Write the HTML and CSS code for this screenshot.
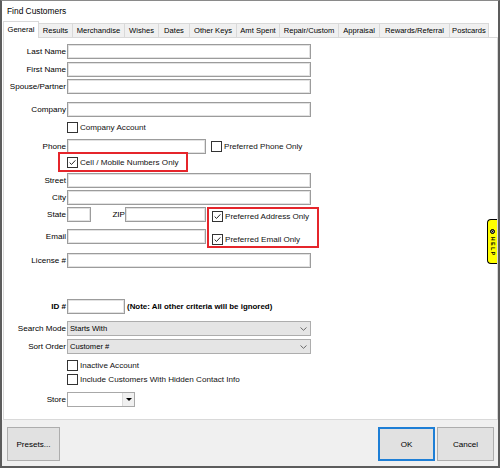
FILE: index.html
```html
<!DOCTYPE html>
<html>
<head>
<meta charset="utf-8">
<link rel="stylesheet" href="styles.css">
</head>
<body>
<div class="window">
  <div class="titlebar">Find Customers</div>
  <div class="tabs">
    <div class="tab active">General</div>
    <div class="tab">Results</div>
    <div class="tab">Merchandise</div>
    <div class="tab">Wishes</div>
    <div class="tab">Dates</div>
    <div class="tab">Other Keys</div>
    <div class="tab">Amt Spent</div>
    <div class="tab">Repair/Custom</div>
    <div class="tab">Appraisal</div>
    <div class="tab">Rewards/Referral</div>
    <div class="tab">Postcards</div>
  </div>
  <div class="panel">
    <div class="form">
      <div class="row r-last"><span class="lbl">Last Name</span><span class="inp full"></span></div>
      <div class="row r-first"><span class="lbl">First Name</span><span class="inp full"></span></div>
      <div class="row r-spouse"><span class="lbl">Spouse/Partner</span><span class="inp full"></span></div>
      <div class="row r-company"><span class="lbl">Company</span><span class="inp full"></span></div>
      <div class="chkrow r-companyacct"><span class="cb"></span><span class="cbtext">Company Account</span></div>
      <div class="row r-phone"><span class="lbl">Phone</span><span class="inp mid"></span><span class="cb pref-phone"></span><span class="cbtext">Preferred Phone Only</span></div>
      <div class="redbox cellbox"><span class="cb"><svg viewBox="0 0 11 11"><polyline points="2,5.6 4.3,7.9 9,2.9"/></svg></span><span class="cbtext">Cell / Mobile Numbers Only</span></div>
      <div class="row r-street"><span class="lbl">Street</span><span class="inp full"></span></div>
      <div class="row r-city"><span class="lbl">City</span><span class="inp full"></span></div>
      <div class="group">
        <div class="group-left">
          <div class="row"><span class="lbl">State</span><span class="inp state"></span><span class="ziplbl">ZIP</span><span class="inp zip"></span></div>
          <div class="row r-email"><span class="lbl">Email</span><span class="inp mid"></span></div>
        </div>
        <div class="redbox prefbox">
          <div class="chkline"><span class="cb"><svg viewBox="0 0 11 11"><polyline points="2,5.6 4.3,7.9 9,2.9"/></svg></span><span class="cbtext">Preferred Address Only</span></div>
          <div class="chkline second"><span class="cb"><svg viewBox="0 0 11 11"><polyline points="2,5.6 4.3,7.9 9,2.9"/></svg></span><span class="cbtext">Preferred Email Only</span></div>
        </div>
      </div>
      <div class="row r-license"><span class="lbl">License #</span><span class="inp full"></span></div>
      <div class="row r-id"><span class="lbl bold">ID #</span><span class="inp idbox"></span><span class="note">(Note: All other criteria will be ignored)</span></div>
      <div class="row r-search"><span class="lbl">Search Mode</span><span class="select"><span>Starts With</span><svg class="chev" viewBox="0 0 7 4"><polyline points="0.5,0.5 3.5,3.3 6.5,0.5"/></svg></span></div>
      <div class="row r-sort"><span class="lbl">Sort Order</span><span class="select"><span>Customer #</span><svg class="chev" viewBox="0 0 7 4"><polyline points="0.5,0.5 3.5,3.3 6.5,0.5"/></svg></span></div>
      <div class="chkrow r-inactive"><span class="cb"></span><span class="cbtext">Inactive Account</span></div>
      <div class="chkrow r-include"><span class="cb"></span><span class="cbtext">Include Customers With Hidden Contact Info</span></div>
      <div class="row r-store"><span class="lbl">Store</span><span class="combo"><span class="combo-btn"><span class="tri"></span></span></span></div>
    </div>
    <div class="help">
      <span class="help-icon"></span>
      <span class="help-text">HELP</span>
    </div>
  </div>
  <div class="footer">
    <div class="btn presets">Presets...</div>
    <div class="spacer"></div>
    <div class="btn ok">OK</div>
    <div class="btn cancel">Cancel</div>
  </div>
</div>
</body>
</html>
```
FILE: styles.css
```css
* { box-sizing: border-box; }
html, body { margin: 0; padding: 0; background: #ffffff; }
body {
  font-family: "Liberation Sans", Arial, sans-serif;
  font-size: 8.1px;
  color: #000;
}
.window {
  width: 500px;
  height: 468px;
  border-top: 1px solid #8a8a8a;
  border-left: 2px solid #5c5c5c;
  border-right: 2px solid #5c5c5c;
  border-bottom: 2px solid #5c5c5c;
  display: flex;
  flex-direction: column;
  background: #fff;
}
.titlebar {
  height: 20px;
  line-height: 21px;
  padding-left: 5px;
  font-size: 8.4px;
  color: #000;
  background: #fff;
}
.tabs {
  height: 16px;
  display: flex;
  align-items: flex-end;
  padding-left: 1px;
  background: #fff;
}
.tab {
  height: 14px;
  border: 1px solid #d9d9d9;
  border-bottom: none;
  background: #f0f0f0;
  margin-left: -1px;
  font-size: 7.6px;
  line-height: 14px;
  text-align: center;
  white-space: nowrap;
  color: #000;
}
.tab:nth-child(1) { width: 36px; margin-left: 0; }
.tab:nth-child(2) { width: 35px; }
.tab:nth-child(3) { width: 53px; }
.tab:nth-child(4) { width: 35px; }
.tab:nth-child(5) { width: 32px; }
.tab:nth-child(6) { width: 48px; }
.tab:nth-child(7) { width: 44px; }
.tab:nth-child(8) { width: 60px; }
.tab:nth-child(9) { width: 42px; }
.tab:nth-child(10) { width: 71px; }
.tab:nth-child(11) { width: 40px; }
.tab.active {
  height: 17px;
  margin-bottom: -1px;
  background: #fff;
  line-height: 15px;
  position: relative;
  z-index: 1;
}
.panel {
  height: 383px;
  width: 495px;
  margin-left: 1px;
  border: 1px solid #d9d9d9;
  background: #fff;
  position: relative;
}
.form {
  padding-top: 6px;
  display: flex;
  flex-direction: column;
}
.row {
  display: flex;
  align-items: center;
  height: 15px;
}
.lbl {
  width: 62px;
  margin-right: 1px;
  text-align: right;
  white-space: nowrap;
}
.lbl.bold { font-weight: bold; }
.inp {
  height: 15px;
  background: #fff;
  border: 1px solid #9c9c9c;
  box-shadow: inset 0 0 0 1px #e2e2e2;
}
.inp.full { width: 244px; }
.inp.mid { width: 139px; }
.inp.state { width: 24px; }
.inp.zip { width: 81px; }
.inp.idbox { width: 58px; }
.ziplbl { width: 34px; text-align: right; }
.r-first { margin-top: 3px; }
.r-spouse { margin-top: 2px; }
.r-company { margin-top: 8px; }
.chkrow {
  display: flex;
  align-items: center;
  height: 11px;
  padding-left: 63px;
}
.r-companyacct { margin-top: 5px; }
.r-phone { margin-top: 6px; }
.pref-phone { margin-left: 5px; }
.cb {
  width: 11px;
  height: 11px;
  flex: 0 0 11px;
  border: 1px solid #333;
  background: #fff;
  display: flex;
}
.cb svg { width: 9px; height: 9px; }
.cb polyline { fill: none; stroke: #222; stroke-width: 1.2; }
.cbtext { margin-left: 2px; white-space: nowrap; color: #111; }
.redbox { border: 2px solid #e5252b; }
.cellbox {
  margin-top: -2px;
  margin-left: 54px;
  width: 130px;
  height: 20px;
  padding-left: 7px;
  display: flex;
  align-items: center;
}
.r-street { margin-top: 1px; }
.r-city { margin-top: 2px; }
.group {
  margin-top: 2px;
  display: flex;
  align-items: flex-start;
}
.group-left { width: 202px; display: flex; flex-direction: column; }
.r-email { margin-top: 7px; }
.prefbox {
  margin-left: 1px;
  width: 112px;
  height: 41px;
  padding: 2px 0 0 3px;
  display: flex;
  flex-direction: column;
}
.chkline { display: flex; align-items: center; height: 11px; }
.chkline.second { margin-top: 12px; }
.r-license { margin-top: 5px; }
.r-id { margin-top: 31px; }
.note { margin-left: 2px; font-weight: bold; font-size: 7.9px; white-space: nowrap; }
.r-search { margin-top: 7px; }
.r-sort { margin-top: 3px; }
.select {
  width: 244px;
  height: 15px;
  background: #e5e5e5;
  border: 1px solid #adadad;
  display: flex;
  align-items: center;
  justify-content: space-between;
  padding-left: 2px;
  padding-right: 3px;
  font-size: 7.6px;
}
.chev { width: 7px; height: 4px; }
.chev polyline { fill: none; stroke: #6a6a6a; stroke-width: 1; }
.r-inactive { margin-top: 6px; }
.r-include { margin-top: 3px; }
.r-store { margin-top: 7px; }
.combo {
  width: 68px;
  height: 15px;
  border: 1px solid #a8a8a8;
  background: #fff;
  display: flex;
  justify-content: flex-end;
}
.combo-btn {
  width: 12px;
  height: 13px;
  background: #f0f0f0;
  border-left: 1px solid #dcdcdc;
  display: flex;
  align-items: center;
  justify-content: center;
}
.tri {
  width: 0;
  height: 0;
  border-left: 3px solid transparent;
  border-right: 3px solid transparent;
  border-top: 3px solid #000;
}
.help {
  position: absolute;
  right: 0;
  top: 181px;
  width: 10px;
  height: 45px;
  background: #ffff00;
  border: 1px solid #000;
  border-right: none;
  border-radius: 4px 0 0 4px;
  display: flex;
  flex-direction: column;
  align-items: center;
  padding-top: 9px;
}
.help-icon {
  width: 5px;
  height: 5px;
  border-radius: 50%;
  background: #000;
  border: 1.5px solid #000;
  box-shadow: inset 0 0 0 0.6px #fff;
}
.help-text {
  margin-top: 3px;
  writing-mode: vertical-rl;
  font-size: 5px;
  letter-spacing: 1.6px;
  font-weight: bold;
  line-height: 8px;
}
.footer {
  flex: 1;
  background: #f0f0f0;
  display: flex;
  align-items: flex-start;
  padding: 7px 4px 0 5px;
}
.spacer { flex: 1; }
.btn {
  height: 34px;
  background: #e1e1e1;
  border: 1px solid #adadad;
  display: flex;
  align-items: center;
  justify-content: center;
  font-size: 8.1px;
  color: #000;
}
.presets { width: 53px; }
.ok { width: 57px; border: 2px solid #1e7fd6; }
.cancel { width: 57px; margin-left: 2px; }
```
